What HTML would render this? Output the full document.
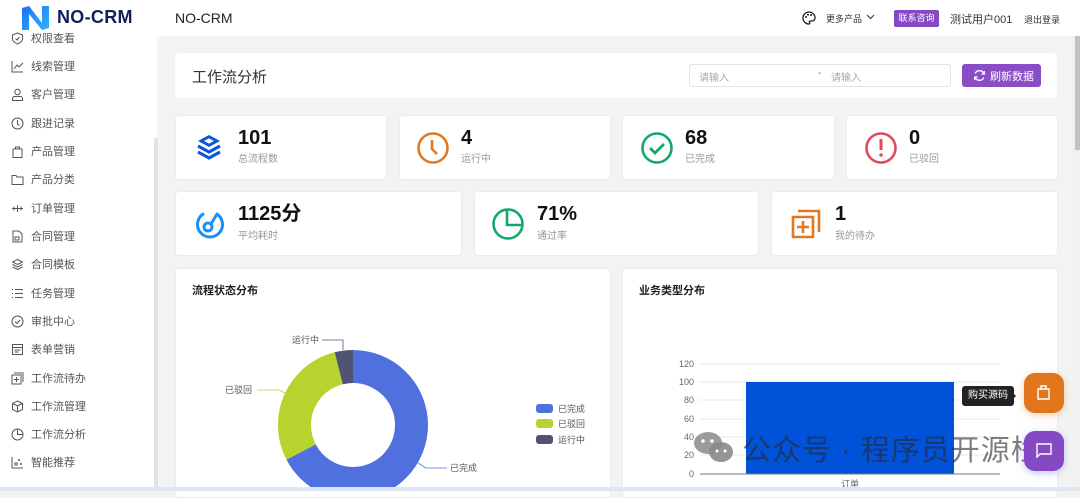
<!DOCTYPE html>
<html><head><meta charset="utf-8"><style>
*{margin:0;padding:0;box-sizing:border-box}
body{width:1080px;height:491px;overflow:hidden;background:#f3f3f3;font-family:"Liberation Sans","Noto Sans CJK SC",sans-serif;position:relative;color:#333}
.a{position:absolute}
.card{position:absolute;background:#fff;border-radius:4px;border:1px solid #ececec}
.side{left:0;top:0;width:155px;height:491px;background:#fff}
.mi{position:absolute;left:11px;font-size:11px;color:#555;height:16px;line-height:16px}
.mi svg{position:absolute;left:0;top:1px}
.mi span{position:absolute;left:20px;white-space:nowrap}
.num{position:absolute;font-weight:bold;font-size:20px;color:#111;line-height:22px}
.lbl{position:absolute;font-size:10px;color:#999;line-height:12px}
</style></head><body>
<!-- sidebar -->
<div class="a side"></div>
<div class="a" style="left:155px;top:36px;width:3px;height:455px;background:#fafafa"></div>
<div class="a" style="left:154px;top:138px;width:4px;height:353px;background:#e2e2e2"></div>
<!-- header -->
<div class="a" style="left:0;top:0;width:1080px;height:36px;background:#fff"></div>
<svg class="a" style="left:21px;top:5px" width="29" height="26" viewBox="0 0 29 26"><defs><linearGradient id="g" x1="0" y1="0" x2="1" y2="1"><stop offset="0" stop-color="#1e6ff0"/><stop offset="1" stop-color="#2fb6ff"/></linearGradient></defs><path d="M1 3 L8 1 L8 25 L1 25Z M8 1 L21 18 L21 25 L8 9Z M21 1 L28 1 L28 23 L21 25Z" fill="url(#g)"/></svg>
<div class="a" style="left:57px;top:7px;font-size:18px;font-weight:bold;color:#12205a;letter-spacing:.3px">NO-CRM</div>
<div class="a" style="left:175px;top:10px;font-size:14px;color:#222">NO-CRM</div>
<svg class="a" style="left:802px;top:11px" width="14" height="14" viewBox="0 0 14 14"><path d="M7 1a6 6 0 1 0 0 12c1 0 1-1 .5-1.6-.5-.6 0-1.4.8-1.4H10a3 3 0 0 0 3-3C13 3.6 10.3 1 7 1z" fill="none" stroke="#222" stroke-width="1.3"/><circle cx="4" cy="6" r="1" fill="#222"/><circle cx="6" cy="3.8" r="1" fill="#222"/><circle cx="9" cy="4" r="1" fill="#222"/></svg>
<div class="a" style="left:826px;top:12px;font-size:9px;color:#333">更多产品</div>
<svg class="a" style="left:866px;top:14px" width="9" height="6" viewBox="0 0 9 6"><path d="M1 1l3.5 3.5L8 1" fill="none" stroke="#444" stroke-width="1.2"/></svg>
<div class="a" style="left:894px;top:10px;width:45px;height:17px;background:#8549c4;border-radius:2px;color:#fff;font-size:9px;text-align:center;line-height:17px">联系咨询</div>
<div class="a" style="left:950px;top:11px;font-size:11px;color:#333">测试用户001</div>
<div class="a" style="left:1024px;top:13px;font-size:9px;color:#333">退出登录</div>
<!-- right scrollbar -->
<div class="a" style="left:1072px;top:36px;width:8px;height:455px;background:#f1f1f1"></div>
<div class="a" style="left:1075px;top:36px;width:5px;height:114px;background:#c1c1c1"></div>
<!-- menu -->
<div class="mi" style="top:31px"><svg width="13" height="13" viewBox="0 0 13 13"><path d="M6.5 1 L11.5 3 V7 C11.5 10 6.5 12 6.5 12 C6.5 12 1.5 10 1.5 7 V3Z" fill="none" stroke="#555"/><path d="M4.5 6.5l1.5 1.5 2.5-3" fill="none" stroke="#555"/></svg><span>权限查看</span></div>
<div class="mi" style="top:59px"><svg width="13" height="13" viewBox="0 0 13 13"><path d="M1 1v11h11M3 9l3-4 2 2 4-4" fill="none" stroke="#555"/></svg><span>线索管理</span></div>
<div class="mi" style="top:87px"><svg width="13" height="13" viewBox="0 0 13 13"><circle cx="6.5" cy="4" r="2.7" fill="none" stroke="#555"/><path d="M1.5 12.5v-2a2 2 0 0 1 2-2h6a2 2 0 0 1 2 2v2z" fill="none" stroke="#555"/></svg><span>客户管理</span></div>
<div class="mi" style="top:116px"><svg width="13" height="13" viewBox="0 0 13 13"><circle cx="6.5" cy="6.5" r="5.5" fill="none" stroke="#555"/><path d="M6.5 3v4l2 1.5" fill="none" stroke="#555"/></svg><span>跟进记录</span></div>
<div class="mi" style="top:144px"><svg width="13" height="13" viewBox="0 0 13 13"><path d="M2 4h9v8.5H2z M4.5 4V2h4v2" fill="none" stroke="#555"/></svg><span>产品管理</span></div>
<div class="mi" style="top:172px"><svg width="13" height="13" viewBox="0 0 13 13"><path d="M1 2.5h4l1 1.5h6v7.5H1z" fill="none" stroke="#555"/></svg><span>产品分类</span></div>
<div class="mi" style="top:201px"><svg width="13" height="13" viewBox="0 0 13 13"><path d="M1 6.5h11M6.5 3v7M3 4.5v4M10 4.5v4" fill="none" stroke="#555"/></svg><span>订单管理</span></div>
<div class="mi" style="top:229px"><svg width="13" height="13" viewBox="0 0 13 13"><path d="M2 1h6l3 3v8H2z" fill="none" stroke="#555"/><rect x="4" y="7" width="4" height="3" fill="none" stroke="#555"/></svg><span>合同管理</span></div>
<div class="mi" style="top:257px"><svg width="13" height="13" viewBox="0 0 13 13"><path d="M6.5 1.5l5 2.5-5 2.5-5-2.5z M1.5 6.5l5 2.5 5-2.5 M1.5 9l5 2.5 5-2.5" fill="none" stroke="#555"/></svg><span>合同模板</span></div>
<div class="mi" style="top:286px"><svg width="13" height="13" viewBox="0 0 13 13"><path d="M1 2.5h1M4 2.5h8M1 6.5h1M4 6.5h8M1 10.5h1M4 10.5h8" stroke="#555"/></svg><span>任务管理</span></div>
<div class="mi" style="top:314px"><svg width="13" height="13" viewBox="0 0 13 13"><circle cx="6.5" cy="6.5" r="5.5" fill="none" stroke="#555"/><path d="M4 6.5l2 2 3-3.5" fill="none" stroke="#555"/></svg><span>审批中心</span></div>
<div class="mi" style="top:342px"><svg width="13" height="13" viewBox="0 0 13 13"><rect x="1.5" y="1.5" width="10" height="10" fill="none" stroke="#555"/><path d="M1.5 4.5h10M3.5 7h6M3.5 9h4" stroke="#555"/></svg><span>表单营销</span></div>
<div class="mi" style="top:371px"><svg width="13" height="13" viewBox="0 0 13 13"><path d="M1 3h9v9H1z M3 1h9v9" fill="none" stroke="#555"/><path d="M5.5 5v5M3 7.5h5" stroke="#555"/></svg><span>工作流待办</span></div>
<div class="mi" style="top:399px"><svg width="13" height="13" viewBox="0 0 13 13"><path d="M6.5 1l5 2.5v6L6.5 12l-5-2.5v-6z M1.5 3.5l5 2.5 5-2.5 M6.5 6v6" fill="none" stroke="#555"/></svg><span>工作流管理</span></div>
<div class="mi" style="top:427px"><svg width="13" height="13" viewBox="0 0 13 13"><circle cx="6.5" cy="6.5" r="5.5" fill="none" stroke="#555"/><path d="M6.5 1v5.5H12" fill="none" stroke="#555"/></svg><span>工作流分析</span></div>
<div class="mi" style="top:455px"><svg width="13" height="13" viewBox="0 0 13 13"><path d="M1 1v11h11" fill="none" stroke="#555"/><circle cx="5" cy="8" r="1.3" fill="none" stroke="#555"/><circle cx="8" cy="4" r="1" fill="#555"/><circle cx="10" cy="8" r="1" fill="#555"/></svg><span>智能推荐</span></div>

<!-- title card -->
<div class="card" style="left:175px;top:53px;width:882px;height:45px;border:none"></div>
<div class="a" style="left:192px;top:66px;font-size:15px;color:#333">工作流分析</div>
<div class="a" style="left:689px;top:64px;width:262px;height:23px;border:1px solid #e4e4e4;border-radius:3px;background:#fff"></div>
<div class="a" style="left:699px;top:69px;font-size:10px;color:#aaa">请输入</div>
<div class="a" style="left:818px;top:68px;font-size:10px;color:#666">-</div>
<div class="a" style="left:831px;top:69px;font-size:10px;color:#aaa">请输入</div>
<div class="a" style="left:962px;top:64px;width:79px;height:23px;background:#8a4dc6;border-radius:3px"></div>
<svg class="a" style="left:973px;top:69px" width="13" height="13" viewBox="0 0 13 13"><path d="M11 5A4.7 4.7 0 0 0 2.2 4.5M2 8a4.7 4.7 0 0 0 8.8.5" fill="none" stroke="#fff" stroke-width="1.3"/><path d="M11.3 2v3h-3M1.7 11V8h3" fill="none" stroke="#fff" stroke-width="1.3"/></svg>
<div class="a" style="left:990px;top:68px;font-size:11px;color:#fff">刷新数据</div>

<!-- stat row 1 -->
<div class="card" style="left:175px;top:115px;width:212px;height:65px"></div>
<div class="card" style="left:399px;top:115px;width:212px;height:65px"></div>
<div class="card" style="left:622px;top:115px;width:213px;height:65px"></div>
<div class="card" style="left:846px;top:115px;width:212px;height:65px"></div>
<svg class="a" style="left:195px;top:133px" width="28" height="28" viewBox="0 0 28 28"><path d="M14 2l11 6-11 6-11-6z M9 8l5 2.6 5-2.6-5-2.6z" fill="#0b55d8" fill-rule="evenodd"/><path d="M3 13l11 6 11-6 M3 19l11 6 11-6" fill="none" stroke="#0b55d8" stroke-width="3"/></svg>
<div class="num" style="left:238px;top:127px">101</div><div class="lbl" style="left:238px;top:154px">总流程数</div>
<svg class="a" style="left:416px;top:131px" width="34" height="34" viewBox="0 0 34 34"><circle cx="17" cy="17" r="14.5" fill="none" stroke="#e07a22" stroke-width="2.6"/><path d="M16 9v9l5 5" fill="none" stroke="#e07a22" stroke-width="2.6"/></svg>
<div class="num" style="left:461px;top:127px">4</div><div class="lbl" style="left:461px;top:154px">运行中</div>
<svg class="a" style="left:640px;top:131px" width="34" height="34" viewBox="0 0 34 34"><circle cx="17" cy="17" r="14.5" fill="none" stroke="#12a86b" stroke-width="2.6"/><path d="M10 17l5 5 9-9" fill="none" stroke="#12a86b" stroke-width="2.8"/></svg>
<div class="num" style="left:685px;top:127px">68</div><div class="lbl" style="left:685px;top:154px">已完成</div>
<svg class="a" style="left:864px;top:131px" width="34" height="34" viewBox="0 0 34 34"><circle cx="17" cy="17" r="14.5" fill="none" stroke="#e04a5a" stroke-width="2.6"/><path d="M17 8v11" stroke="#e04a5a" stroke-width="3"/><circle cx="17" cy="24" r="1.8" fill="#e04a5a"/></svg>
<div class="num" style="left:909px;top:127px">0</div><div class="lbl" style="left:909px;top:154px">已驳回</div>

<!-- stat row 2 -->
<div class="card" style="left:175px;top:191px;width:287px;height:65px"></div>
<div class="card" style="left:474px;top:191px;width:285px;height:65px"></div>
<div class="card" style="left:771px;top:191px;width:287px;height:65px"></div>
<svg class="a" style="left:193px;top:207px" width="34" height="34" viewBox="0 0 34 34"><path d="M11 6.5A12.5 12.5 0 1 0 23 6.5" fill="none" stroke="#1a8ff5" stroke-width="3"/><circle cx="15" cy="20" r="4" fill="none" stroke="#1a8ff5" stroke-width="3"/><path d="M18 17l6-10" stroke="#1a8ff5" stroke-width="3"/></svg>
<div class="num" style="left:238px;top:203px">1125分</div><div class="lbl" style="left:238px;top:231px">平均耗时</div>
<svg class="a" style="left:491px;top:207px" width="34" height="34" viewBox="0 0 34 34"><circle cx="17" cy="17" r="14.5" fill="none" stroke="#12a86b" stroke-width="2.6"/><path d="M16 3v15h15" fill="none" stroke="#12a86b" stroke-width="2.6"/></svg>
<div class="num" style="left:537px;top:203px">71%</div><div class="lbl" style="left:537px;top:231px">通过率</div>
<svg class="a" style="left:790px;top:208px" width="32" height="32" viewBox="0 0 32 32"><path d="M3 9h20v20H3z" fill="none" stroke="#e07a22" stroke-width="2.6"/><path d="M8 3h21v21" fill="none" stroke="#e07a22" stroke-width="2.6"/><path d="M13 13v12M7 19h12" stroke="#e07a22" stroke-width="2.6"/></svg>
<div class="num" style="left:835px;top:203px">1</div><div class="lbl" style="left:835px;top:231px">我的待办</div>

<!-- chart cards -->
<div class="card" style="left:175px;top:268px;width:436px;height:230px"></div>
<div class="card" style="left:622px;top:268px;width:436px;height:230px"></div>
<div class="a" style="left:192px;top:282px;font-size:11px;font-weight:bold;color:#222">流程状态分布</div>
<div class="a" style="left:639px;top:282px;font-size:11px;font-weight:bold;color:#222">业务类型分布</div>

<svg class="a" style="left:175px;top:268px" width="436" height="223" viewBox="175 268 436 223">
<circle cx="353" cy="425" r="58.5" fill="none" stroke="#5070dd" stroke-width="33" stroke-dasharray="247.5 400" transform="rotate(-90 353 425)"/>
<circle cx="353" cy="425" r="58.5" fill="none" stroke="#b6d32e" stroke-width="33" stroke-dasharray="0 247.5 105.5 400" transform="rotate(-90 353 425)"/>
<circle cx="353" cy="425" r="58.5" fill="none" stroke="#505372" stroke-width="33" stroke-dasharray="0 353 14.6 400" transform="rotate(-90 353 425)"/>
<path d="M343 350 L343 340 L322 340" fill="none" stroke="#505372" stroke-width="0.8"/>
<path d="M285 393 L279 390 L257 390" fill="none" stroke="#b6d32e" stroke-width="0.8"/>
<path d="M418 463 L426 468 L447 468" fill="none" stroke="#5070dd" stroke-width="0.8"/>
<text x="292" y="343" font-size="9" fill="#555" font-family="Liberation Sans,Noto Sans CJK SC,sans-serif">运行中</text>
<text x="225" y="393" font-size="9" fill="#555" font-family="Liberation Sans,Noto Sans CJK SC,sans-serif">已驳回</text>
<text x="450" y="471" font-size="9" fill="#555" font-family="Liberation Sans,Noto Sans CJK SC,sans-serif">已完成</text>
<rect x="536" y="404" width="17" height="9" rx="3" fill="#5070dd"/>
<rect x="536" y="419" width="17" height="9" rx="3" fill="#b6d32e"/>
<rect x="536" y="435" width="17" height="9" rx="3" fill="#505372"/>
<text x="558" y="412" font-size="9" fill="#555" font-family="Liberation Sans,Noto Sans CJK SC,sans-serif">已完成</text>
<text x="558" y="427" font-size="9" fill="#555" font-family="Liberation Sans,Noto Sans CJK SC,sans-serif">已驳回</text>
<text x="558" y="443" font-size="9" fill="#555" font-family="Liberation Sans,Noto Sans CJK SC,sans-serif">运行中</text>
</svg>

<svg class="a" style="left:622px;top:340px" width="436" height="151" viewBox="622 340 436 151" font-family="Liberation Sans,Noto Sans CJK SC,sans-serif">
<g stroke="#e8e8e8" stroke-width="1">
<line x1="700" y1="364" x2="1000" y2="364"/><line x1="700" y1="382" x2="1000" y2="382"/><line x1="700" y1="400" x2="1000" y2="400"/><line x1="700" y1="419" x2="1000" y2="419"/><line x1="700" y1="437" x2="1000" y2="437"/><line x1="700" y1="455" x2="1000" y2="455"/>
</g>
<rect x="746" y="382" width="208" height="92" fill="#0052d9"/>
<line x1="700" y1="474" x2="1000" y2="474" stroke="#777"/>
<g font-size="9" fill="#666" text-anchor="end">
<text x="694" y="367">120</text><text x="694" y="385">100</text><text x="694" y="403">80</text><text x="694" y="422">60</text><text x="694" y="440">40</text><text x="694" y="458">20</text><text x="694" y="477">0</text>
</g>
<text x="850" y="487" font-size="9" fill="#666" text-anchor="middle">订单</text>
</svg>

<!-- watermark -->
<svg class="a" style="left:693px;top:430px" width="42" height="36" viewBox="0 0 42 36"><ellipse cx="15" cy="13" rx="14" ry="11" fill="#8a8a8a" opacity=".85"/><ellipse cx="28" cy="22" rx="12" ry="10" fill="#8a8a8a" opacity=".9"/><circle cx="10" cy="11" r="1.8" fill="#fff"/><circle cx="19" cy="11" r="1.8" fill="#fff"/><circle cx="24" cy="21" r="1.5" fill="#fff"/><circle cx="32" cy="21" r="1.5" fill="#fff"/></svg>
<div class="a" style="left:742px;top:427px;font-size:29px;color:rgba(40,40,40,.6);white-space:nowrap;letter-spacing:1px">公众号 · 程序员开源栈</div>

<!-- floating -->
<div class="a" style="left:962px;top:386px;width:52px;height:20px;background:#222;border-radius:3px;color:#fff;font-size:10px;text-align:center;line-height:20px">购买源码</div>
<div class="a" style="left:1012px;top:392px;width:0;height:0;border-top:4px solid transparent;border-bottom:4px solid transparent;border-left:4px solid #222"></div>
<div class="a" style="left:1024px;top:373px;width:40px;height:40px;background:#e2761c;border-radius:11px;box-shadow:0 2px 8px rgba(226,118,28,.35)"></div>
<svg class="a" style="left:1036px;top:384px" width="15" height="16" viewBox="0 0 15 16"><path d="M2 5h11v10H2z M5 5V2h5v3" fill="none" stroke="#fff" stroke-width="1.4"/></svg>
<div class="a" style="left:1024px;top:431px;width:40px;height:40px;background:#8549c4;border-radius:11px;box-shadow:0 2px 8px rgba(80,100,230,.35)"></div>
<svg class="a" style="left:1035px;top:442px" width="18" height="16" viewBox="0 0 18 16"><path d="M2 2h14v10H5l-3 3z" fill="none" stroke="#fff" stroke-width="1.4"/></svg>

<div class="a" style="left:0;top:487px;width:1080px;height:4px;background:#dde6f5"></div>
</body></html>
